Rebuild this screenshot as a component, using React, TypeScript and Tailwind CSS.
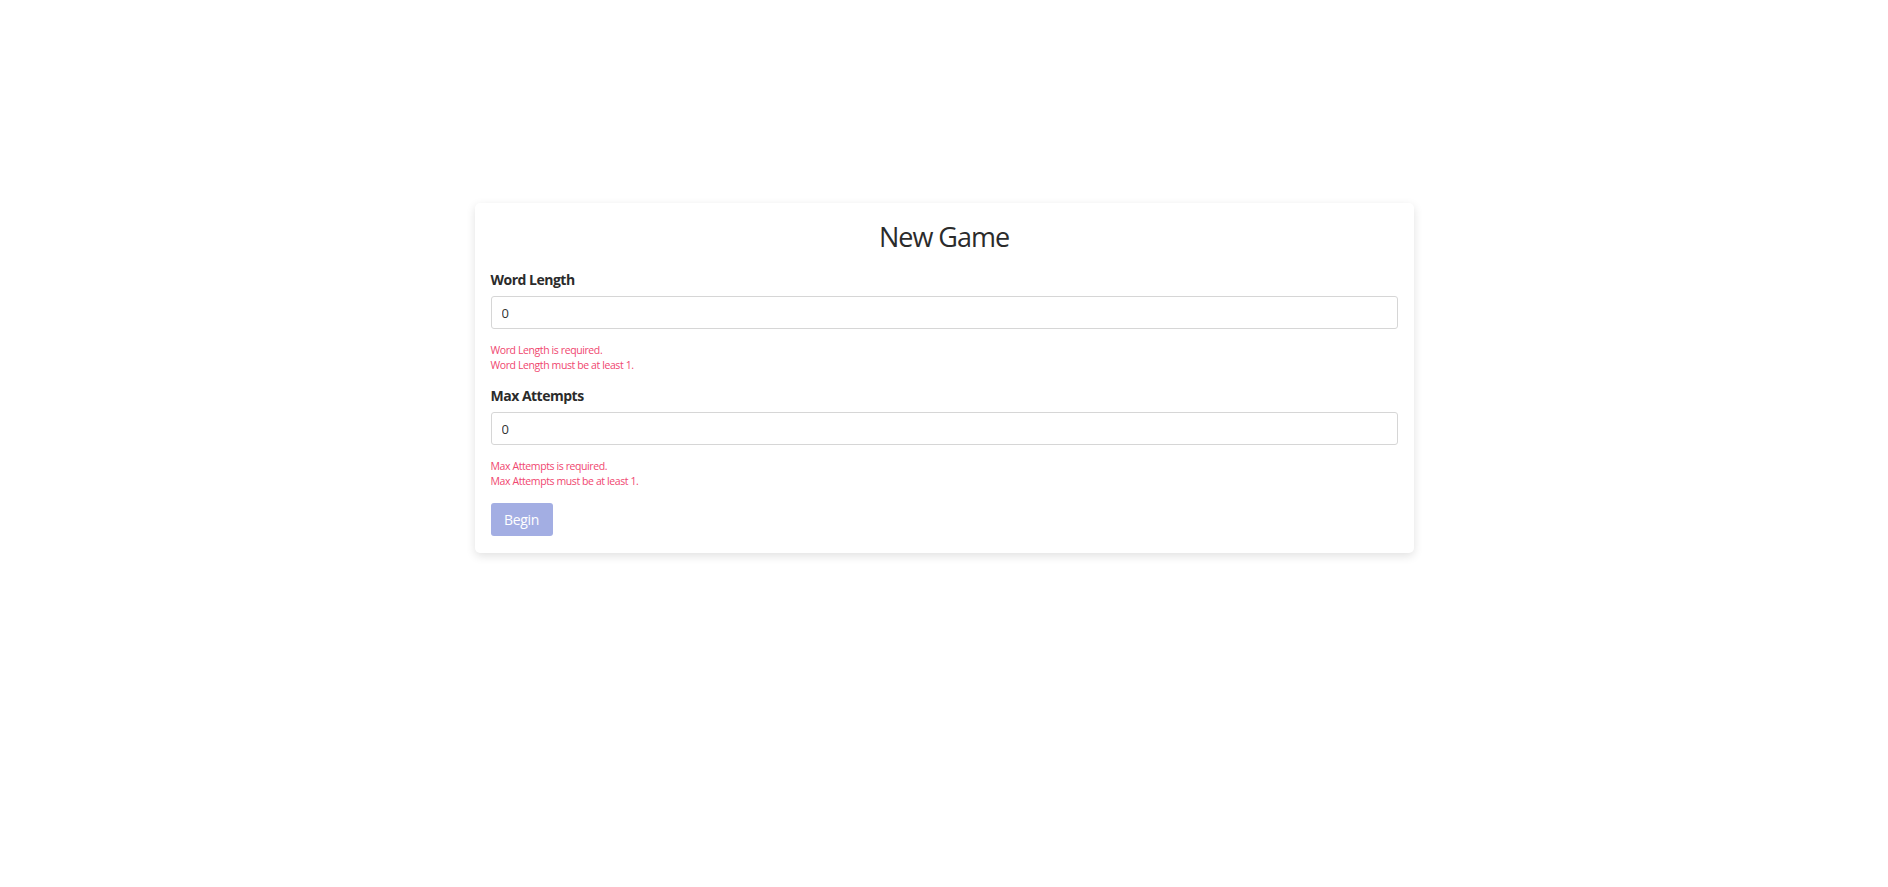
export default function App() {
  const fields = [
    { label: 'Word Length', value: '0' },
    { label: 'Max Attempts', value: '0' },
  ];

  return (
    <div className="min-h-screen bg-white pt-[203px] font-['Open_Sans','Noto_Sans',sans-serif] text-[#212529]">
      <div className="mx-auto w-[939px] rounded-[5px] bg-white px-4 pb-[17px] pt-4 shadow-[0_3px_10px_rgba(0,0,0,0.12)]">
        {/* Title */}
        <h1 className="mb-[15px] mt-[1px] h-[34px] text-center text-[27px] font-medium leading-[34px] tracking-[-1px] text-[#2b2b2b]">New Game</h1>

        {fields.map((field, i) => (
          <div key={i} className="mb-3">
            <label className="mb-[6px] block text-[14px] font-bold leading-[21px] tracking-[-0.5px] text-[#2b2b2b]">
              {field.label}
            </label>
            <input
              type="text"
              readOnly
              value={field.value}
              className="block h-[33px] w-full rounded-[3px] border border-[#d6d6d6] px-[10px] text-[13px] text-[#333] outline-none"
            />
            <div className="mt-[14px] text-[10.5px] leading-[15px] tracking-[-0.4px] text-[#f0466f]">
              <div>{field.label} is required.</div>
              <div>{field.label} must be at least 1.</div>
            </div>
          </div>
        ))}

        <button
          disabled
          className="mt-[2px] h-[33px] w-[62px] rounded-[3px] bg-[#a3aee3] text-[14px] tracking-[-0.3px] text-white"
        >
          Begin
        </button>
      </div>
    </div>
  );
}
